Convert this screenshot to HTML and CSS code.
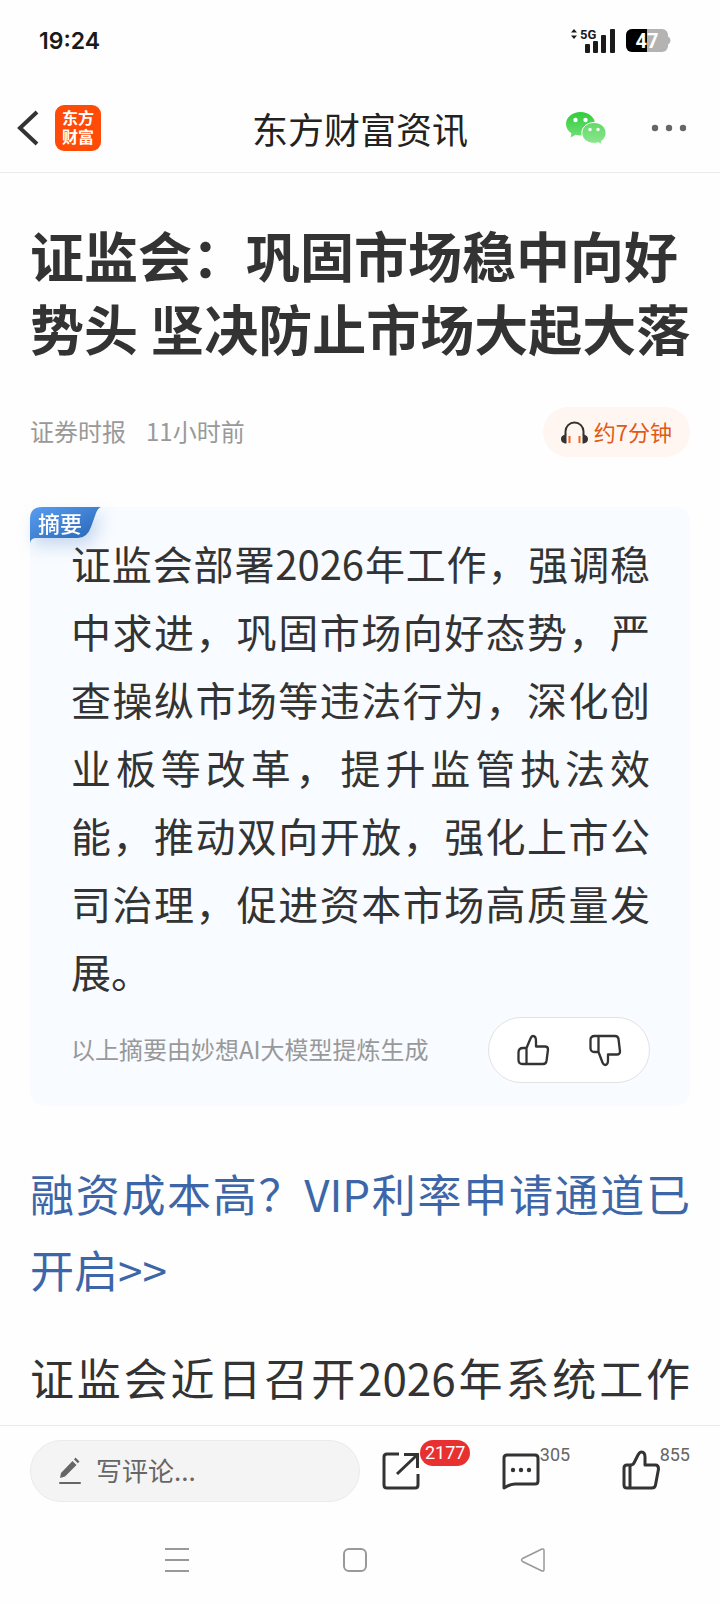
FILE: index.html
```html
<!DOCTYPE html>
<html lang="zh-CN">
<head>
    <meta charset="UTF-8">
    <meta name="viewport" content="width=device-width, initial-scale=1.0">

    <title>东方财富资讯</title>

    <link rel="stylesheet" href="styles.css">
</head>
<body>
    <div class="status-bar">
        <span class="clock">19:24</span>
        <div class="status-icons">
            <svg width="46" height="26" viewBox="0 0 46 26" aria-hidden="true">
                <path d="M1 4.500L4 1l3 3.500zM1 7.500L4 11l3-3.500z" fill="#1a1a1a"/>
                <text class="network" x="10" y="11">5G</text>
                <g fill="#1a1a1a">
                    <rect x="15" y="16" width="5" height="9" rx="1"/>
                    <rect x="23" y="13" width="5" height="12" rx="1"/>
                    <rect x="31" y="7" width="5" height="18" rx="1"/>
                    <rect x="40" y="1" width="5" height="24" rx="1"/>
                </g>
            </svg>
            <svg width="45" height="24" viewBox="0 0 45 24" aria-hidden="true">
                <rect x="0" y="0" width="42" height="23" rx="6" fill="#b3b3b3"/>
                <path d="M42 7.500q2.500 1 2.500 4t-2.500 4z" fill="#b3b3b3"/>
                <path d="M21 0H6a6 6 0 0 0-6 6v11a6 6 0 0 0 6 6h15z" fill="#000"/>
                <text class="battery" x="21" y="19" text-anchor="middle">47</text>
            </svg>
        </div>
    </div>

    <header class="top-bar">
        <div class="top-left">
            <button class="icon-btn" aria-label="返回">
                <svg width="24" height="38" viewBox="0 0 24 38">
                    <path d="M20 3L3 19l17 16" fill="none" stroke="#333" stroke-width="4"/>
                </svg>
            </button>
            <a class="logo" href="#">东方<br>财富</a>
        </div>
        <h2>东方财富资讯</h2>
        <div class="top-right">
            <button class="icon-btn" aria-label="分享到微信">
                <svg width="42" height="34" viewBox="0 0 42 34">
                    <defs>
                        <linearGradient id="wx1" x1="0" y1="0" x2="0" y2="1">
                            <stop offset="0" stop-color="#2fcd3c"/>
                            <stop offset="1" stop-color="#74de78"/>
                        </linearGradient>
                        <linearGradient id="wx2" x1="0" y1="0" x2="0" y2="1">
                            <stop offset="0" stop-color="#62d968"/>
                            <stop offset="1" stop-color="#8de78f"/>
                        </linearGradient>
                    </defs>
                    <path d="M15.500 1C7.500 1 1 6.300 1 13c0 3.800 2 7 5.500 9.300L5.500 26.500l5.200-2.700c1.500.5 3.200.7 4.800.7 8 0 14.500-5.200 14.500-11.700S23.500 1 15.500 1z" fill="url(#wx1)"/>
                    <path d="M29 11.500c-6.800 0-12.200 4.700-12.200 10.500S22.200 32.300 29 32.300c1.500 0 3-.2 4.200-.6l3.900 2-.9-3.300c3-2 4.900-4.900 4.900-8.400 0-5.800-5.400-10.500-12.100-10.500z" fill="url(#wx2)" stroke="#fff" stroke-width="1"/>
                    <g fill="#fff">
                        <circle cx="10.500" cy="9" r="2.200"/>
                        <circle cx="20.500" cy="9" r="2.200"/>
                        <circle cx="25" cy="18.500" r="1.700"/>
                        <circle cx="33" cy="18.500" r="1.700"/>
                    </g>
                </svg>
            </button>
            <button class="icon-btn" aria-label="更多">
                <svg width="36" height="8" viewBox="0 0 36 8" fill="#666">
                    <circle cx="4" cy="4" r="3.200"/>
                    <circle cx="18" cy="4" r="3.200"/>
                    <circle cx="32" cy="4" r="3.200"/>
                </svg>
            </button>
        </div>
    </header>

    <main>
        <h1>证监会：巩固市场稳中向好势头 坚决防止市场大起大落</h1>

        <div class="meta">
            <span>证券时报</span>
            <span>11小时前</span>
            <button class="listen">
                <svg width="27" height="23" viewBox="0 0 27 23" aria-hidden="true">
                    <path d="M4.500 14v-3.500a9 9 0 0 1 18 0V14" fill="none" stroke="#333" stroke-width="2"/>
                    <path d="M5.500 13.500v9C2.500 22.500 0 21 0 18s2.500-4.500 5.500-4.500zM21.500 13.500v9c3 0 5.500-1.500 5.500-4.500s-2.500-4.500-5.500-4.500z" fill="#333"/>
                    <path d="M8.500 15v7M18.500 15v7" stroke="#f0641e" stroke-width="2"/>
                </svg>
                <span>约7分钟</span>
            </button>
        </div>

        <section class="summary">
            <div class="tag">
                <svg width="71" height="36" viewBox="0 0 71 36" aria-hidden="true">
                    <defs>
                        <linearGradient id="tag" x1="0" y1="0" x2="1" y2="1">
                            <stop offset="0" stop-color="#5a9df0"/>
                            <stop offset="1" stop-color="#2262b2"/>
                        </linearGradient>
                    </defs>
                    <path d="M0 36V12Q0 0 12 0h59q-3 1-5 6l-5 14q-4 11-13 11H6q-5 0-6 5z" fill="url(#tag)"/>
                </svg>
                <span>摘要</span>
            </div>
            <p>证监会部署2026年工作，强调稳中求进，巩固市场向好态势，严查操纵市场等违法行为，深化创业板等改革，提升监管执法效能，推动双向开放，强化上市公司治理，促进资本市场高质量发展。</p>
            <div class="summary-foot">
                <small>以上摘要由妙想AI大模型提炼生成</small>
                <div class="vote">
                    <button class="icon-btn" aria-label="赞同">
                        <svg width="32" height="32" viewBox="0 0 32 32" fill="none" stroke="#333" stroke-width="2.300" stroke-linejoin="round">
                            <path d="M9.500 14H6q-4.500 0-4.500 4.500V26q0 4 4 4H26q3 0 3.500-3L31 15.500q0-3-3-3h-9V7q0-5-3-5-1.500 0-2.500 2.500zM9.500 14v16"/>
                        </svg>
                    </button>
                    <button class="icon-btn" aria-label="反对">
                        <svg width="32" height="32" viewBox="0 0 32 32" fill="none" stroke="#333" stroke-width="2.300" stroke-linejoin="round">
                            <path d="M9.500 18H5.500q-4 0-4-4V6q0-4 4-4H26q3 0 3.500 3L31 17.500q0 3-3 3h-9V26q0 5-3 5-1.500 0-2.500-2.500zM9.500 18V2"/>
                        </svg>
                    </button>
                </div>
            </div>
        </section>

        <p class="text"><a href="#">融资成本高？VIP利率申请通道已开启&gt;&gt;</a></p>
        <p class="text full-line">证监会近日召开2026年系统工作</p>
    </main>

    <footer>
        <div class="actions">
            <label class="comment">
                <svg width="22" height="30" viewBox="0 0 22 30" aria-hidden="true" fill="#666">
                    <path d="M1 22l1-5L13.500 5l4 4L6 20.500zM15 3.500L16.500 1.500l4 4L18.800 7.300z"/>
                    <rect x="0" y="26" width="22" height="2" rx="1"/>
                </svg>
                <input type="text" placeholder="写评论..." aria-label="写评论">
            </label>
            <button class="action">
                <svg width="38" height="38" viewBox="0 0 38 38" aria-label="分享" fill="none" stroke="#333" stroke-width="3">
                    <path d="M17 2H5Q2 2 2 5v28q0 3 3 3h28q3 0 3-3V22"/>
                    <path d="M22 2.500h13.500V16M35 3L15 22"/>
                </svg>
                <span class="count badge">2177</span>
            </button>
            <button class="action">
                <svg width="38" height="38" viewBox="0 0 38 38" aria-label="评论" fill="none" stroke="#333" stroke-width="3" stroke-linejoin="round">
                    <path d="M2 36V6q0-3 3-3h28q3 0 3 3v23q0 3-3 3H13q-5 0-11 4z"/>
                    <g fill="#333" stroke="none">
                        <circle cx="11" cy="18" r="2.200"/>
                        <circle cx="19" cy="18" r="2.200"/>
                        <circle cx="27" cy="18" r="2.200"/>
                    </g>
                </svg>
                <span class="count">305</span>
            </button>
            <button class="action">
                <svg width="38" height="38" viewBox="0 0 38 38" aria-label="点赞" fill="none" stroke="#333" stroke-width="3" stroke-linejoin="round">
                    <path d="M8 13H5q-3 0-3 3v17q0 3 3 3h25q3 0 3.500-3L36.500 17q0-4-3-4H23V5q0-5-3.500-5-2 0-3.500 3l-4 8q-1 2-4 2zM8 13v23"/>
                </svg>
                <span class="count">855</span>
            </button>
        </div>
        <nav>
            <button class="icon-btn" aria-label="最近任务">
                <svg width="26" height="26" viewBox="0 0 26 26" stroke="#999" stroke-width="2">
                    <path d="M1 2h24M1 13h24M1 24h24"/>
                </svg>
            </button>
            <button class="icon-btn" aria-label="主屏幕">
                <svg width="26" height="26" viewBox="0 0 26 26" fill="none" stroke="#999" stroke-width="2">
                    <rect x="2" y="2" width="22" height="22" rx="5"/>
                </svg>
            </button>
            <button class="icon-btn" aria-label="返回上一页">
                <svg width="26" height="26" viewBox="0 0 26 26" fill="none" stroke="#999" stroke-width="1.500" stroke-linejoin="round">
                    <path d="M2.500 11.500L22 2q2-.5 2 1.500v19q0 2-2 1.500L2.500 14.500q-2-1.500 0-3z"/>
                </svg>
            </button>
        </nav>
    </footer>
</body>
</html>
```
FILE: styles.css
```css
:root {
    --text-color: #333;
    --muted-text-color: #999;
    --link-color: #3d66a8;
    --border-color: #ebebeb;
    --side: 30px;
}

* {
    box-sizing: border-box;
}

body {
    font-family: "Noto Sans CJK SC", sans-serif;
    background-color: #fefefe;
    color: var(--text-color);

    margin: 0;
    height: 100vh;

    display: flex;
    flex-direction: column;
}

svg {
    display: block;
    flex: none;
    overflow: visible;
}

button {
    font: inherit;
    color: inherit;
    background: none;
    border: none;
    padding: 0;
    cursor: pointer;
}

h1,
h2,
p {
    margin: 0;
}

a {
    color: var(--link-color);
    text-decoration: none;
}

.status-bar {
    flex: none;
    height: 84px;
    padding: 0 49px 2px 39px;

    display: flex;
    align-items: center;
    justify-content: space-between;
}

.clock {
    font-family: Inter, sans-serif;
    font-size: 23px;
    font-weight: 600;
    color: #1a1a1a;
}

.status-icons {
    display: flex;
    align-items: center;
    gap: 10px;
}

.network {
    font: 700 13px Roboto, sans-serif;
    fill: #1a1a1a;
}

.battery {
    font: 700 20px Roboto, sans-serif;
    fill: #fff;
}

.top-bar {
    flex: none;
    height: 89px;
    padding: 0 33px 0 17px;
    border-bottom: 1px solid var(--border-color);

    display: grid;
    grid-template-columns: 1fr auto 1fr;
    align-items: center;
}

.top-left,
.top-right {
    display: flex;
    align-items: center;
    gap: 14px;
}

.top-right {
    justify-content: flex-end;
    gap: 44px;
}

.top-bar h2 {
    font-size: 36px;
    font-weight: 400;
    line-height: 44px;
    color: #222;
    padding-left: 16px;
}

.logo {
    width: 46px;
    height: 46px;
    border-radius: 9px;
    background-color: #ff4a08;
    color: white;
    font-size: 16px;
    font-weight: 700;
    line-height: 19px;
    padding-top: 3px;
    text-align: center;
}

main {
    flex: 1;
    min-height: 0;
    overflow: hidden;
    padding: 45px var(--side) 0;
}

h1 {
    font-size: 54px;
    font-weight: 700;
    line-height: 73px;
    margin-right: -6px;
}

.meta {
    display: flex;
    align-items: center;
    gap: 20px;
    margin-top: 43px;

    font-size: 24px;
    line-height: 36px;
    color: var(--muted-text-color);
}

.meta span {
    padding-bottom: 3px;
}

.listen {
    display: flex;
    align-items: center;
    gap: 6px;
    height: 50px;
    padding: 0 18px;
    margin-left: auto;
    border-radius: 25px;

    background-color: #fff5f1;
    color: #e05a14;
    font-size: 22px;
}

.summary {
    position: relative;
    margin-top: 50px;
    padding: 22px 40px 23px 41px;
    border-radius: 15px;
    background-color: #f8fbff;
}

.tag {
    position: absolute;
    top: 0;
    left: 0;
    filter: drop-shadow(4px 8px 8px rgba(60, 120, 200, 0.25));
}

.tag span {
    position: absolute;
    top: 0;
    left: 8px;
    color: white;
    font-size: 22px;
    font-weight: 500;
    line-height: 30px;
}

.summary p {
    font-size: 40px;
    line-height: 68px;
    text-align: justify;
}

.summary-foot {
    display: flex;
    align-items: center;
    justify-content: space-between;
    margin-top: 12px;
}

.summary-foot small {
    font-size: 24px;
    color: var(--muted-text-color);
    padding-bottom: 3px;
}

.vote {
    display: flex;
    align-items: center;
    justify-content: space-between;
    width: 162px;
    height: 66px;
    padding: 0 28px;
    border: 1px solid #e2e2e2;
    border-radius: 33px;
    background-color: white;
}

.text {
    margin-top: 32px;
    font-size: 44px;
    line-height: 76px;
    text-align: justify;
}

.summary + .text {
    margin-top: 49px;
}

.full-line {
    text-align-last: justify;
}

footer {
    flex: none;
    border-top: 1px solid var(--border-color);
}

.actions {
    display: grid;
    grid-template-columns: 50% 1fr 1fr auto;
    align-items: start;
    height: 90px;
    padding: 14px var(--side) 0;
}

.comment {
    display: flex;
    align-items: center;
    gap: 15px;
    min-width: 0;
    height: 62px;
    padding: 0 28px;
    border: 1px solid var(--border-color);
    border-radius: 31px;
    background-color: #f4f4f4;
}

.comment input {
    flex: 1;
    min-width: 0;
    border: none;
    padding: 0 0 3px;
    background: none;
    font: inherit;
    font-size: 26px;
    color: var(--text-color);
}

.comment input::placeholder {
    color: #666;
    opacity: 1;
}

.action {
    display: flex;
    align-items: flex-start;
    padding-left: 22px;
}

.action svg {
    margin-top: 12px;
}

.count {
    font-family: Roboto, sans-serif;
    font-size: 18px;
    line-height: 20px;
    padding-top: 5px;
    color: #666;
}

.badge {
    padding: 3px 5px;
    border-radius: 13px;
    background-color: #e93030;
    color: white;
}

nav {
    display: grid;
    grid-template-columns: repeat(3, 1fr);
    justify-items: center;
    align-items: center;
    height: 88px;
    padding: 0 98px 0 88px;
}
```
